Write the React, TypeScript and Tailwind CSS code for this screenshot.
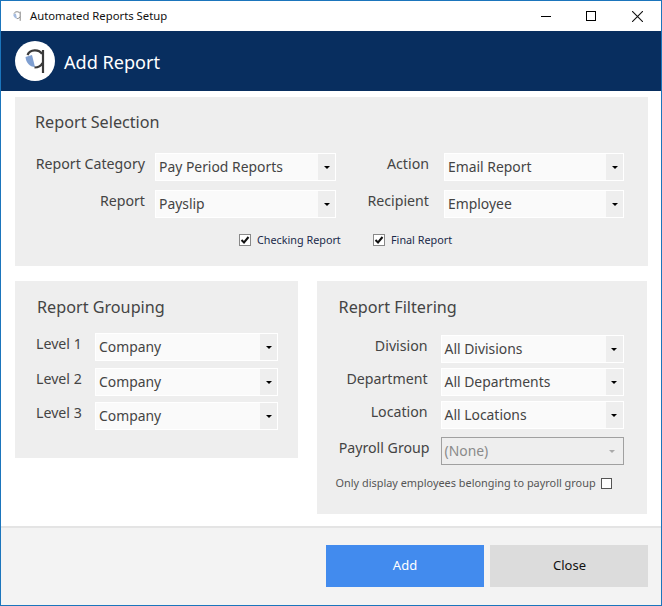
function Logo({ small }: { small?: boolean }) {
  return (
    <svg viewBox="0 0 40 40" className={small ? "h-[16px] w-[16px] opacity-70" : "h-[40px] w-[40px]"}>
      {!small && <circle cx="20" cy="20" r="20" fill="#fff" />}
      <path d="M10.500 16 L17 14 L20 26 C14.500 26 11 21.500 10.500 16 Z" fill="#7f9fd1" />
      <path d="M12.500 14 C15 8 24 8 27 13" fill="none" stroke="#3a3a3a" strokeWidth="2.200" />
      <path d="M19.500 26.500 C23 26.500 26 25 27.500 22" fill="none" stroke="#3a3a3a" strokeWidth="2.200" />
      <path d="M28 9 V32" stroke="#3a3a3a" strokeWidth="2.200" />
    </svg>
  );
}

function Select({ value, className }: { value: string; className: string }) {
  return (
    <div className={`flex h-[28px] shrink-0 border border-white bg-[#fafafa] ${className}`}>
      <span className="flex-1 whitespace-nowrap pl-[3px] text-[13.9px] leading-[25px] text-[#444]">{value}</span>
      <span className="flex w-[17px] items-center justify-center bg-[#eeeeee]">
        <span className="mt-[1px] h-0 w-0 border-x-[3px] border-t-[3px] border-x-transparent border-t-black" />
      </span>
    </div>
  );
}

function Label({ text, className }: { text: string; className: string }) {
  return <span className={`shrink-0 whitespace-nowrap pb-[6px] text-[14.2px] text-[#444] ${className}`}>{text}</span>;
}

function Check({ label, className }: { label: string; className: string }) {
  return (
    <div className={`flex items-center gap-[6px] ${className}`}>
      <span className="flex h-[12px] w-[12px] items-center justify-center border border-[#888] bg-white">
        <svg viewBox="0 0 10 10" className="h-[10px] w-[10px]">
          <path d="M1.500 5 L4 7.500 L8.500 2" fill="none" stroke="#111" strokeWidth="2" />
        </svg>
      </span>
      <span className="text-[10.800px] text-[#1a2a4a]">{label}</span>
    </div>
  );
}

export default function App() {
  return (
    <div
      className="flex h-[606px] w-[662px] flex-col overflow-hidden border border-[#1b75bc] bg-white"
      style={{ fontFamily: '"Noto Sans", "Open Sans", sans-serif' }}
    >
      <div className="flex h-[30px] shrink-0 items-center pl-[8px]">
        <Logo small />
        <span className="ml-[5px] text-[11.300px] text-[#111]">Automated Reports Setup</span>
        <div className="ml-auto flex items-center">
          <span className="h-[1px] w-[10px] bg-black" />
          <span className="ml-[35px] h-[10px] w-[10px] border border-black" />
          <svg viewBox="0 0 10 10" className="ml-[36px] mr-[18px] h-[11px] w-[11px]">
            <path d="M0 0 L10 10 M10 0 L0 10" stroke="#111" strokeWidth="1" />
          </svg>
        </div>
      </div>

      <div className="flex h-[60px] shrink-0 items-center bg-[#082e5f] pl-[14px]">
        <Logo />
        <span className="ml-[9px] pt-[4px] text-[18.100px] text-white">Add Report</span>
      </div>

      <div className="flex flex-1 flex-col px-[14px] pt-[6px]">
        <section className="h-[169px] w-[633px] bg-[#eeeeee] pl-[20px] pt-[14px]">
          <h2 className="text-[16.200px] leading-[22px] text-[#444]">Report Selection</h2>
          <div className="mt-[20px] flex items-center">
            <Label text="Report Category" className="w-[110px] text-right" />
            <Select value="Pay Period Reports" className="ml-[10px] w-[181px]" />
            <Label text="Action" className="w-[93px] text-right" />
            <Select value="Email Report" className="ml-[15px] w-[180px]" />
          </div>
          <div className="mt-[9px] flex items-center">
            <Label text="Report" className="w-[110px] text-right" />
            <Select value="Payslip" className="ml-[10px] w-[181px]" />
            <Label text="Recipient" className="w-[93px] text-right" />
            <Select value="Employee" className="ml-[15px] w-[180px]" />
          </div>
          <div className="mt-[14px] flex">
            <Check label="Checking Report" className="ml-[204px] w-[134px]" />
            <Check label="Final Report" className="" />
          </div>
        </section>

        <div className="mt-[15px] flex items-start">
          <section className="h-[177px] w-[283px] bg-[#eeeeee] pl-[21px] pt-[15px]">
            <h2 className="pl-[1px] text-[16.200px] leading-[22px] text-[#444]">Report Grouping</h2>
            <div className="mt-[15px] flex flex-col gap-[6.500px]">
              {["Level 1", "Level 2", "Level 3"].map((l) => (
                <div key={l} className="flex items-center">
                  <Label text={l} className="w-[46px] text-left" />
                  <Select value="Company" className="ml-[13px] w-[183px]" />
                </div>
              ))}
            </div>
          </section>

          <section className="ml-[19px] h-[233px] w-[331px] bg-[#eeeeee] pt-[15px]">
            <h2 className="pl-[22px] text-[16.200px] leading-[22px] text-[#444]">Report Filtering</h2>
            <div className="mt-[17px] flex flex-col gap-[5px]">
              {[
                ["Division", "All Divisions"],
                ["Department", "All Departments"],
                ["Location", "All Locations"],
              ].map(([l, v]) => (
                <div key={l} className="flex items-center">
                  <Label text={l} className="w-[111px] text-right" />
                  <Select value={v} className="ml-[13px] w-[183px]" />
                </div>
              ))}
            </div>
            <div className="mt-[8px] flex items-center">
              <Label text="Payroll Group" className="w-[113px] text-right" />
              <div className="ml-[11px] flex h-[28px] w-[183px] items-center justify-between border border-[#a0a0a0] pl-[3px] pr-[8px]">
                <span className="text-[13.900px] text-[#8a8a8a]">(None)</span>
                <span className="h-0 w-0 border-x-[3px] border-t-[3px] border-x-transparent border-t-[#aaa]" />
              </div>
            </div>
            <div className="mt-[10px] flex items-center pl-[19px]">
              <span className="whitespace-nowrap text-[10.900px] text-[#555]">Only display employees belonging to payroll group</span>
              <span className="ml-[5px] h-[11px] w-[11px] border border-[#555] bg-white" />
            </div>
          </section>
        </div>
      </div>

      <footer className="flex h-[79px] shrink-0 items-end justify-end gap-[6px] border-t-2 border-[#e4e4e4] bg-[#f3f3f3] pb-[18px] pr-[13px]">
        <button className="h-[42px] w-[158px] bg-[#428bee] text-[13px] text-white">Add</button>
        <button className="h-[42px] w-[158px] bg-[#dcdcdc] pl-[1px] text-[13px] text-[#111]">Close</button>
      </footer>
    </div>
  );
}
